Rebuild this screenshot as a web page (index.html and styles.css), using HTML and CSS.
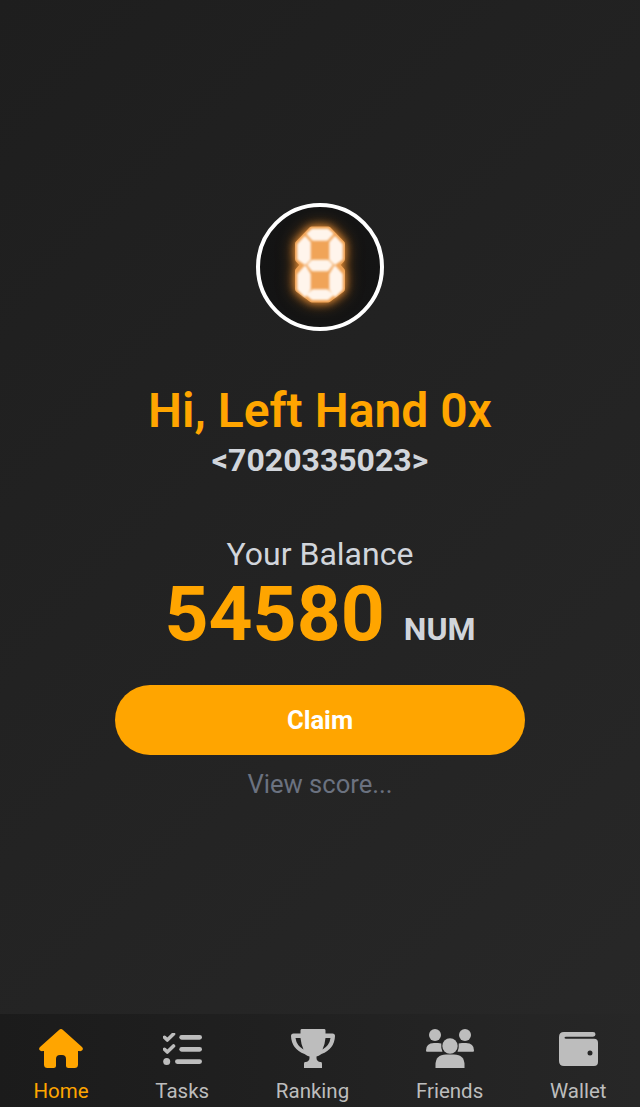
FILE: index.html
```html
<!DOCTYPE html>
<html lang="en">
    <head>
        <meta charset="UTF-8">
        <meta name="viewport" content="width=device-width, initial-scale=1">
        <title> Home </title>
        <link rel="stylesheet" href="styles.css">
    </head>
    <body>
        <main class="home">
            <div class="avatar">
                <svg class="digit" viewBox="0 0 70 92" width="70" height="92">
                    <g class="digit-glow">
                        <path class="digit-core" d="M27 12 H43 L56.500 26 V41 L51 46.800 L56.500 53 V71 L43 81 H27 L13.500 71 V53 L19 46.800 L13.500 41 V26 Z"/>
                        <g class="digit-segments">
                            <path d="M23 16 L27.500 12 H42.500 L47 16 L42 21.500 H28 Z"/>
                            <path d="M20 19.500 L13.500 26.500 V41 L20 45.500 L24.500 41 V24.500 Z"/>
                            <path d="M50 19.500 L56.500 26.500 V41 L50 45.500 L45.500 41 V24.500 Z"/>
                            <path d="M23.500 46.800 L27.500 43 H42.500 L46.500 46.800 L42.500 52 H27.500 Z"/>
                            <path d="M20 49 L13.500 56.500 V71 L20 77.500 L24.500 71 V56.500 Z"/>
                            <path d="M50 49 L56.500 56.500 V71 L50 77.500 L45.500 71 V56.500 Z"/>
                            <path d="M23 77 L28 72.500 H42 L47 77 L42.500 80.800 H27.500 Z"/>
                        </g>
                    </g>
                </svg>
            </div>
            <h1 class="greeting">Hi, Left Hand 0x</h1>
            <p class="user-id">&lt;7020335023&gt;</p>
            <p class="balance-label">Your Balance</p>
            <div class="balance">
                <span class="balance-value">54580</span>
                <span class="balance-unit">NUM</span>
            </div>
            <button class="claim" type="button">Claim</button>
            <a class="view-score" href="#">View score...</a>
        </main>
        <nav class="tabs">
            <a class="tab tab-active" href="#">
                <span class="tab-icon">
                    <svg viewBox="0 0 44 39" width="44" height="39">
                        <path d="M22 0 Q23 0 24 1 L43 18 Q44.500 19.500 43.500 21 Q42.500 22.500 40 22 L39 22 V35.500 Q39 39 35.500 39 H29.500 Q27 39 27 36.500 V30 Q27 26 23 26 H21 Q17 26 17 30 V36.500 Q17 39 14.500 39 H8.500 Q5 39 5 35.500 V22 L4 22 Q1.500 22.500 .5 21 Q-.5 19.500 1 18 L20 1 Q21 0 22 0 Z"/>
                    </svg>
                </span>
                <span>Home</span>
            </a>
            <a class="tab" href="#">
                <span class="tab-icon">
                    <svg viewBox="0 0 39 32" width="39" height="32">
                        <path class="tick" d="M1.500 4.300 L4.300 7 L10.500 1 M1.500 16.300 L4.300 19 L10.500 13"/>
                        <circle cx="3.700" cy="28.500" r="3.500"/>
                        <rect x="16.300" y="2" width="22.700" height="4.700" rx="2.350"/>
                        <rect x="16.300" y="14" width="22.700" height="4.700" rx="2.350"/>
                        <rect x="12" y="26.200" width="27" height="4.700" rx="2.350"/>
                    </svg>
                </span>
                <span>Tasks</span>
            </a>
            <a class="tab" href="#">
                <span class="tab-icon">
                    <svg viewBox="0 0 44 39" width="44" height="39">
                        <path fill-rule="evenodd" d="M10.500 0 H33.500 Q34.500 0 34.500 1.500 V4.500 H41.500 Q44 4.500 44 7 Q43.500 20 30.500 25 Q27.500 27 25.500 27.500 V29 Q25.500 32 29 33 H30 Q31 33 31 35 V39 H13 V35 Q13 33 14 33 H15 Q18.500 32 18.500 29 V27.500 Q16.500 27 13.500 25 Q.5 20 0 7 Q0 4.500 2.500 4.500 H9.500 V1.500 Q9.500 0 10.500 0 Z M34.500 9 Q34 15 31.500 20.500 Q38.500 16.500 39.500 9 Z M9.500 9 Q10 15 12.500 20.500 Q5.500 16.500 4.500 9 Z"/>
                    </svg>
                </span>
                <span>Ranking</span>
            </a>
            <a class="tab" href="#">
                <span class="tab-icon">
                    <svg viewBox="0 0 48 39" width="48" height="39">
                        <circle cx="9" cy="6" r="6"/>
                        <circle cx="39" cy="6" r="6"/>
                        <circle cx="24" cy="17" r="7.700"/>
                        <path d="M0 21.500 Q0 14 8 14 H12 Q14 14 15.300 14.600 Q14.800 19 16.500 22.700 H1 Q0 22.700 0 21.500 Z"/>
                        <path d="M48 21.500 Q48 14 40 14 H36 Q34 14 32.700 14.600 Q33.200 19 31.500 22.700 H47 Q48 22.700 48 21.500 Z"/>
                        <path d="M9.500 39 V36 Q9.500 25.500 20 25.500 H28 Q38.500 25.500 38.500 36 V39 Z"/>
                    </svg>
                </span>
                <span>Friends</span>
            </a>
            <a class="tab" href="#">
                <span class="tab-icon">
                    <svg viewBox="0 0 39 34" width="39" height="34">
                        <path fill-rule="evenodd" d="M5 0 H34 Q36.500 0 36.500 2.300 Q36.500 4.700 34 4.700 H7 Q5.500 4.700 5.500 5.700 Q5.500 6.700 7 6.700 H35 Q39 6.700 39 10.700 V30 Q39 34 35 34 H5 Q0 34 0 29 V5 Q0 0 5 0 Z M31 18.500 A2.500 2.500 0 1 0 31 23.500 A2.500 2.500 0 1 0 31 18.500 Z"/>
                    </svg>
                </span>
                <span>Wallet</span>
            </a>
        </nav>
    </body>
</html>
```

FILE: styles.css
```css
* {
    box-sizing: border-box;
}
html, body {
    height: 100%;
}
body {
    margin: 0;
    display: flex;
    flex-direction: column;
    font-family: Roboto, "Liberation Sans", sans-serif;
    background: linear-gradient(135deg, #1e1e1e, #282828);
    color: #d1d5db;
}
.home {
    flex: 1;
    display: flex;
    flex-direction: column;
    align-items: center;
    padding-top: 203px;
}
.avatar {
    width: 128px;
    height: 128px;
    display: flex;
    align-items: center;
    justify-content: center;
    border: 4px solid #fff;
    border-radius: 50%;
    background: radial-gradient(circle, #121212 0, #141414 70%, #1b1b1b 100%);
}
.digit {
    margin-bottom: 6px;
    overflow: visible;
}
.digit-glow {
    filter: drop-shadow(0 0 4px #e8903a) drop-shadow(0 0 7px #8a5218);
}
.digit-core {
    fill: #f0a458;
    stroke: #f0a458;
    stroke-width: 7;
    stroke-linejoin: round;
}
.digit-segments {
    fill: #fff5ec;
    stroke: #fff5ec;
    stroke-width: 2.500;
    stroke-linejoin: round;
    filter: blur(.9px);
}
.greeting {
    margin: 52px 0 0;
    font-size: 48px;
    line-height: 56px;
    font-weight: 600;
    color: #ffa500;
}
.user-id {
    margin: -1px 0 0;
    font-size: 32px;
    line-height: 44px;
    font-weight: 700;
}
.balance-label {
    margin: 50px 0 0;
    font-size: 32px;
    line-height: 44px;
    font-weight: 400;
}
.balance {
    display: flex;
    align-items: baseline;
    gap: 19px;
    line-height: 76px;
}
.balance-value {
    font-size: 76.800px;
    font-weight: 700;
    color: #ffa500;
}
.balance-unit {
    font-size: 32px;
    font-weight: 700;
}
.claim {
    width: 410px;
    height: 70px;
    margin-top: 18px;
    border: 0;
    border-radius: 35px;
    background: #ffa500;
    color: #fff;
    font-family: inherit;
    font-size: 25.600px;
    font-weight: 700;
}
.view-score {
    margin-top: 11px;
    font-size: 25.600px;
    line-height: 36px;
    color: #6b7280;
    text-decoration: none;
}
.tabs {
    height: 93px;
    display: flex;
    justify-content: space-around;
    background: linear-gradient(90deg, #1b1b1b, #272727);
}
.tab {
    display: flex;
    flex-direction: column;
    align-items: center;
    justify-content: flex-end;
    gap: 10px;
    padding-bottom: 3px;
    color: #bdbdbd;
    fill: #bdbdbd;
    font-size: 20.500px;
    line-height: 26px;
    text-decoration: none;
}
.tab-icon {
    height: 39px;
    display: flex;
    align-items: center;
}
.tab-active {
    color: #ffa500;
    fill: #ffa500;
}
.tick {
    fill: none;
    stroke: #bdbdbd;
    stroke-width: 3.600;
    stroke-linecap: round;
    stroke-linejoin: round;
}
```
